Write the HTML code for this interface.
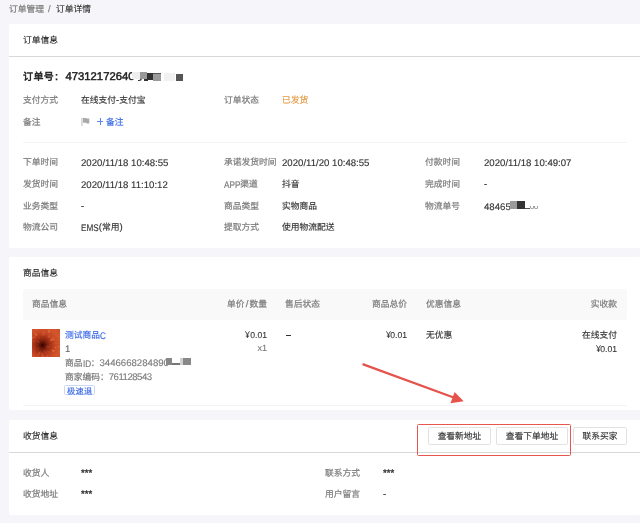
<!DOCTYPE html>
<html lang="zh-CN"><head><meta charset="utf-8">
<style>
@font-face{font-family:"LSA";src:local("Liberation Sans");size-adjust:110%;unicode-range:U+0000-024F,U+00A5,U+2013;}
@font-face{font-family:"LSA";font-weight:600 900;src:local("Liberation Sans Bold"),local("LiberationSans-Bold");size-adjust:107%;unicode-range:U+0000-024F;}
html,body{margin:0;padding:0}
body{width:640px;height:523px;overflow:hidden;position:relative;background:#f6f6fa;font-family:"LSA","Liberation Sans",sans-serif;font-size:8.75px;color:#333;text-rendering:geometricPrecision}
.wrap{position:absolute;left:0;top:0;width:640px;height:523px;will-change:transform}
.a{position:absolute;white-space:nowrap;line-height:12px;font-weight:400;-webkit-text-stroke-width:0.14px}
.card{position:absolute;left:9px;width:632px;background:#fff;border-radius:2px}
.lb{color:#7b7b7b;-webkit-text-stroke-width:0.2px}
.t{color:#1e1e1e;-webkit-text-stroke-width:0.1px}
.n{-webkit-text-stroke-width:0.12px}
.cap{display:inline-block;transform:scaleX(.85);transform-origin:0 50%;position:relative;top:.5px}
.yen{display:inline-block;transform:scaleX(.85);transform-origin:100% 50%;-webkit-text-stroke-width:.1px}
.hr{position:absolute;height:1px}
.r{text-align:right}
.blue{color:#3a69e8}
.btn{position:absolute;top:426.7px;height:18.6px;border:1px solid #e2e2e2;border-radius:2px;background:#fff;box-sizing:border-box}
.rd{position:absolute}
</style></head><body><div class="wrap">
<!-- breadcrumb -->
<div class="a lb" style="left:9px;top:4px">订单管理</div>
<div class="a lb n" style="left:48px;top:4px">/</div>
<div class="a" style="left:56px;top:4px;color:#333">订单详情</div>

<!-- card 1 -->
<div class="card" style="top:24px;height:224px"></div>
<div class="a t" style="left:23px;top:35px">订单信息</div>
<div class="hr" style="left:9px;top:56px;width:631px;background:#d8d8dc"></div>
<div class="a" style="left:23px;top:70px;font-size:10px;color:#1f1f1f;line-height:14px;letter-spacing:.4px;-webkit-text-stroke-width:0.5px">订单号</div>
<div class="a n" style="left:55px;top:70px;font-size:10px;color:#1f1f1f;line-height:14px;-webkit-text-stroke-width:0.6px">:</div>
<div class="a n" style="left:65.5px;top:70px;font-size:10.27px;color:#1f1f1f;line-height:14px;-webkit-text-stroke-width:0.5px">47312172640</div>
<div class="rd" style="left:132px;top:72px;width:7.5px;height:7px;background:#eeeeee"></div>
<div class="rd" style="left:138px;top:77.5px;width:3.5px;height:3.5px;border:1.3px solid #333;border-top:none;border-left:none;border-radius:0 0 3px 0;box-sizing:border-box"></div>
<div class="rd" style="left:140px;top:72px;width:7px;height:6.6px;background:#999"></div>
<div class="rd" style="left:143.8px;top:79.2px;width:4.7px;height:1.6px;background:#333"></div>
<div class="rd" style="left:147.2px;top:73px;width:6.3px;height:7px;background:#323232"></div>
<div class="rd" style="left:153px;top:73px;width:7.7px;height:7.5px;background:#9a9a9a;border-top:1px solid #555;box-sizing:border-box"></div>
<div class="rd" style="left:164px;top:73px;width:10.7px;height:7.6px;background:#f1f1f1"></div>
<div class="rd" style="left:175.8px;top:73.5px;width:7.4px;height:7.1px;background:#555"></div>

<div class="a lb" style="left:23px;top:95px">支付方式</div>
<div class="a" style="left:81px;top:95px">在线支付-支付宝</div>
<div class="a lb" style="left:224px;top:95px">订单状态</div>
<div class="a" style="left:282px;top:95px;color:#e3983f">已发货</div>

<div class="a lb" style="left:23px;top:117px">备注</div>
<svg style="position:absolute;left:80px;top:117px" width="11" height="10" viewBox="0 0 11 10"><rect x="1" y="0.8" width="1.8" height="8.1" fill="#d8d8d8"/><path d="M3 0.9 H6.2 L7 1.5 H9.3 V6.4 H6.8 L6 5.8 H3 Z" fill="#a9a9ad"/></svg>
<div class="rd" style="left:97px;top:121px;width:6.4px;height:1px;background:#5a85ea"></div>
<div class="rd" style="left:99.8px;top:118px;width:1px;height:6.8px;background:#5a85ea"></div>
<div class="a blue" style="left:106px;top:117px">备注</div>

<div class="hr" style="left:23px;top:142px;width:604px;background:#f4f4f4"></div>

<div class="a lb" style="left:23px;top:157px">下单时间</div>
<div class="a n" style="left:81px;top:158px">2020/11/18 10:48:55</div>
<div class="a lb" style="left:224px;top:157px">承诺发货时间</div>
<div class="a n" style="left:282px;top:158px">2020/11/20 10:48:55</div>
<div class="a lb" style="left:425px;top:157px">付款时间</div>
<div class="a n" style="left:484px;top:158px">2020/11/18 10:49:07</div>

<div class="a lb" style="left:23px;top:179px">发货时间</div>
<div class="a n" style="left:81px;top:180px">2020/11/18 11:10:12</div>
<div class="a lb" style="left:224px;top:179px"><span class="cap" style="margin-right:-2.9px">APP</span>渠道</div>
<div class="a" style="left:282px;top:179px">抖音</div>
<div class="a lb" style="left:425px;top:179px">完成时间</div>
<div class="a n" style="left:484px;top:179px">-</div>

<div class="a lb" style="left:23px;top:201px">业务类型</div>
<div class="a n" style="left:81px;top:201px">-</div>
<div class="a lb" style="left:224px;top:201px">商品类型</div>
<div class="a" style="left:282px;top:201px">实物商品</div>
<div class="a lb" style="left:425px;top:201px">物流单号</div>
<div class="a n" style="left:484px;top:202px">48465</div>
<div class="rd" style="left:510px;top:201px;width:7px;height:8px;background:#9a9a9a"></div>
<div class="rd" style="left:517px;top:201px;width:8px;height:8px;background:#333"></div>
<div class="rd" style="left:525px;top:208px;width:5px;height:1px;background:#555"></div>
<div class="rd" style="left:530px;top:206px;width:3.5px;height:3px;border:1px solid #999;border-top:none;border-radius:0 0 2px 2px;box-sizing:border-box"></div>
<div class="rd" style="left:534px;top:206px;width:3.5px;height:3px;border:1px solid #999;border-top:none;border-radius:0 0 2px 2px;box-sizing:border-box"></div>

<div class="a lb" style="left:23px;top:222px">物流公司</div>
<div class="a" style="left:81px;top:222px"><span class="cap" style="margin-right:-3.1px">EMS</span>(常用)</div>
<div class="a lb" style="left:224px;top:222px">提取方式</div>
<div class="a" style="left:282px;top:222px">使用物流配送</div>

<!-- card 2 -->
<div class="card" style="top:257px;height:153px"></div>
<div class="a t" style="left:23px;top:268px">商品信息</div>
<div style="position:absolute;left:23px;top:289px;width:604px;height:30.6px;background:#f9f9f9;border-radius:3px"></div>
<div class="a lb" style="left:32px;top:299px">商品信息</div>
<div class="a lb r" style="left:167px;width:100px;top:299px">单价<span style="margin:0 1.2px">/</span>数量</div>
<div class="a lb" style="left:285px;top:299px">售后状态</div>
<div class="a lb r" style="left:307px;width:100px;top:299px">商品总价</div>
<div class="a lb" style="left:426px;top:299px">优惠信息</div>
<div class="a lb r" style="left:517px;width:100px;top:299px">实收款</div>

<svg style="position:absolute;left:32px;top:329px" width="28" height="28" viewBox="0 0 28 28">
<defs><radialGradient id="fl" cx="10.6" cy="16.1" r="22" gradientUnits="userSpaceOnUse"><stop offset="0" stop-color="#2c0402"/><stop offset="0.1" stop-color="#5a1006"/><stop offset="0.32" stop-color="#9a2c14"/><stop offset="0.55" stop-color="#c44624"/><stop offset="0.8" stop-color="#d4562c"/><stop offset="1" stop-color="#cc502a"/></radialGradient></defs>
<rect width="28" height="28" fill="url(#fl)"/>
<ellipse cx="21.6" cy="10.4" rx="1.6" ry="0.6" transform="rotate(333 21.6 10.4)" fill="#f08048" opacity="0.53"/>
<ellipse cx="15.3" cy="27.2" rx="1.2" ry="0.6" transform="rotate(67 15.3 27.2)" fill="#e8703c" opacity="0.46"/>
<ellipse cx="0.9" cy="23.5" rx="1.9" ry="0.7" transform="rotate(143 0.9 23.5)" fill="#c84626" opacity="0.26"/>
<ellipse cx="5.6" cy="15.2" rx="1.2" ry="0.5" transform="rotate(190 5.6 15.2)" fill="#e8703c" opacity="0.12"/>
<ellipse cx="3.8" cy="29.1" rx="1.2" ry="0.5" transform="rotate(117 3.8 29.1)" fill="#d85a30" opacity="0.42"/>
<ellipse cx="4.2" cy="5.7" rx="1.3" ry="0.8" transform="rotate(238 4.2 5.7)" fill="#e8703c" opacity="0.50"/>
<ellipse cx="7.4" cy="23.6" rx="1.4" ry="0.4" transform="rotate(113 7.4 23.6)" fill="#e8703c" opacity="0.22"/>
<ellipse cx="16.8" cy="7.1" rx="2.2" ry="0.7" transform="rotate(305 16.8 7.1)" fill="#e8703c" opacity="0.29"/>
<ellipse cx="15.0" cy="13.9" rx="1.5" ry="0.7" transform="rotate(334 15.0 13.9)" fill="#ee8a50" opacity="0.06"/>
<ellipse cx="-1.8" cy="3.0" rx="1.3" ry="0.4" transform="rotate(227 -1.8 3.0)" fill="#d85a30" opacity="0.26"/>
<ellipse cx="21.7" cy="28.6" rx="1.0" ry="0.6" transform="rotate(48 21.7 28.6)" fill="#ee8a50" opacity="0.31"/>
<ellipse cx="-0.6" cy="11.7" rx="1.2" ry="0.7" transform="rotate(201 -0.6 11.7)" fill="#f08048" opacity="0.40"/>
<ellipse cx="2.3" cy="23.5" rx="2.2" ry="0.4" transform="rotate(138 2.3 23.5)" fill="#c84626" opacity="0.32"/>
<ellipse cx="16.4" cy="10.9" rx="1.5" ry="0.7" transform="rotate(319 16.4 10.9)" fill="#c84626" opacity="0.15"/>
<ellipse cx="18.4" cy="15.6" rx="1.3" ry="0.7" transform="rotate(356 18.4 15.6)" fill="#d85a30" opacity="0.29"/>
<ellipse cx="6.6" cy="19.6" rx="1.3" ry="0.7" transform="rotate(139 6.6 19.6)" fill="#e8703c" opacity="0.12"/>
<ellipse cx="2.2" cy="24.9" rx="2.2" ry="0.6" transform="rotate(134 2.2 24.9)" fill="#c84626" opacity="0.30"/>
<ellipse cx="-0.9" cy="26.1" rx="1.4" ry="0.5" transform="rotate(139 -0.9 26.1)" fill="#c84626" opacity="0.34"/>
<ellipse cx="17.6" cy="13.3" rx="2.2" ry="0.8" transform="rotate(339 17.6 13.3)" fill="#c84626" opacity="0.14"/>
<ellipse cx="16.3" cy="17.8" rx="1.6" ry="0.5" transform="rotate(17 16.3 17.8)" fill="#ee8a50" opacity="0.11"/>
<ellipse cx="17.2" cy="2.9" rx="1.4" ry="0.5" transform="rotate(297 17.2 2.9)" fill="#e8703c" opacity="0.29"/>
<ellipse cx="6.6" cy="12.6" rx="1.3" ry="0.8" transform="rotate(222 6.6 12.6)" fill="#e8703c" opacity="0.07"/>
<ellipse cx="3.4" cy="20.6" rx="1.1" ry="0.5" transform="rotate(148 3.4 20.6)" fill="#c84626" opacity="0.27"/>
<ellipse cx="17.7" cy="23.8" rx="2.1" ry="0.8" transform="rotate(47 17.7 23.8)" fill="#c84626" opacity="0.38"/>
<ellipse cx="13.5" cy="19.7" rx="1.0" ry="0.8" transform="rotate(51 13.5 19.7)" fill="#d85a30" opacity="0.11"/>
<ellipse cx="25.9" cy="18.2" rx="1.6" ry="0.7" transform="rotate(8 25.9 18.2)" fill="#d85a30" opacity="0.30"/>
<ellipse cx="21.5" cy="21.4" rx="1.5" ry="0.4" transform="rotate(26 21.5 21.4)" fill="#f08048" opacity="0.53"/>
<ellipse cx="19.5" cy="10.8" rx="1.9" ry="0.8" transform="rotate(329 19.5 10.8)" fill="#ee8a50" opacity="0.47"/>
<ellipse cx="23.4" cy="18.6" rx="1.0" ry="0.7" transform="rotate(11 23.4 18.6)" fill="#ee8a50" opacity="0.45"/>
<ellipse cx="6.4" cy="12.7" rx="1.8" ry="0.8" transform="rotate(219 6.4 12.7)" fill="#ee8a50" opacity="0.14"/>
<ellipse cx="0.2" cy="10.3" rx="2.0" ry="0.4" transform="rotate(209 0.2 10.3)" fill="#c84626" opacity="0.26"/>
<ellipse cx="0.4" cy="8.6" rx="1.3" ry="0.7" transform="rotate(216 0.4 8.6)" fill="#ee8a50" opacity="0.52"/>
<ellipse cx="3.8" cy="5.3" rx="2.1" ry="0.5" transform="rotate(238 3.8 5.3)" fill="#f08048" opacity="0.49"/>
<ellipse cx="12.7" cy="22.8" rx="2.1" ry="0.7" transform="rotate(73 12.7 22.8)" fill="#ee8a50" opacity="0.19"/>
<ellipse cx="11.2" cy="27.4" rx="1.3" ry="0.7" transform="rotate(87 11.2 27.4)" fill="#f08048" opacity="0.51"/>
<ellipse cx="-0.2" cy="25.7" rx="1.4" ry="0.5" transform="rotate(138 -0.2 25.7)" fill="#ee8a50" opacity="0.37"/>
<ellipse cx="14.3" cy="13.2" rx="1.1" ry="0.8" transform="rotate(322 14.3 13.2)" fill="#f08048" opacity="0.06"/>
<ellipse cx="15.9" cy="6.6" rx="1.6" ry="0.7" transform="rotate(299 15.9 6.6)" fill="#c84626" opacity="0.36"/>
<ellipse cx="14.7" cy="18.2" rx="2.1" ry="0.4" transform="rotate(27 14.7 18.2)" fill="#d85a30" opacity="0.08"/>
<ellipse cx="17.0" cy="16.9" rx="1.6" ry="0.4" transform="rotate(7 17.0 16.9)" fill="#d85a30" opacity="0.13"/>
<ellipse cx="13.7" cy="19.9" rx="1.8" ry="0.6" transform="rotate(51 13.7 19.9)" fill="#c84626" opacity="0.10"/>
<ellipse cx="7.6" cy="9.1" rx="1.6" ry="0.5" transform="rotate(246 7.6 9.1)" fill="#e8703c" opacity="0.26"/>
<ellipse cx="6.1" cy="15.1" rx="1.3" ry="0.7" transform="rotate(193 6.1 15.1)" fill="#c84626" opacity="0.09"/>
<ellipse cx="11.0" cy="5.0" rx="2.0" ry="0.8" transform="rotate(272 11.0 5.0)" fill="#e8703c" opacity="0.35"/>
<ellipse cx="19.2" cy="9.2" rx="1.6" ry="0.5" transform="rotate(321 19.2 9.2)" fill="#e8703c" opacity="0.34"/>
<ellipse cx="17.1" cy="2.0" rx="1.9" ry="0.5" transform="rotate(295 17.1 2.0)" fill="#ee8a50" opacity="0.59"/>
<ellipse cx="24.1" cy="14.2" rx="2.0" ry="0.5" transform="rotate(352 24.1 14.2)" fill="#e8703c" opacity="0.37"/>
<ellipse cx="21.0" cy="22.0" rx="1.7" ry="0.7" transform="rotate(30 21.0 22.0)" fill="#ee8a50" opacity="0.57"/>
<ellipse cx="6.4" cy="18.1" rx="1.7" ry="0.7" transform="rotate(154 6.4 18.1)" fill="#f08048" opacity="0.08"/>
<ellipse cx="11.2" cy="4.2" rx="1.7" ry="0.7" transform="rotate(273 11.2 4.2)" fill="#c84626" opacity="0.47"/>
<ellipse cx="1.7" cy="12.6" rx="1.5" ry="0.7" transform="rotate(202 1.7 12.6)" fill="#c84626" opacity="0.24"/>
<ellipse cx="23.3" cy="-1.2" rx="1.7" ry="0.6" transform="rotate(306 23.3 -1.2)" fill="#f08048" opacity="0.39"/>
<ellipse cx="13.7" cy="18.8" rx="1.5" ry="0.6" transform="rotate(41 13.7 18.8)" fill="#e8703c" opacity="0.05"/>
<ellipse cx="-1.3" cy="11.2" rx="1.9" ry="0.4" transform="rotate(203 -1.3 11.2)" fill="#c84626" opacity="0.41"/>
<ellipse cx="26.8" cy="7.3" rx="1.5" ry="0.5" transform="rotate(331 26.8 7.3)" fill="#ee8a50" opacity="0.29"/>
<ellipse cx="20.8" cy="8.7" rx="1.4" ry="0.5" transform="rotate(324 20.8 8.7)" fill="#c84626" opacity="0.26"/>
<ellipse cx="15.2" cy="15.4" rx="1.2" ry="0.4" transform="rotate(352 15.2 15.4)" fill="#d85a30" opacity="0.07"/>
<ellipse cx="1.3" cy="28.1" rx="1.1" ry="0.7" transform="rotate(128 1.3 28.1)" fill="#e8703c" opacity="0.55"/>
<ellipse cx="-1.5" cy="4.2" rx="1.9" ry="0.8" transform="rotate(224 -1.5 4.2)" fill="#e8703c" opacity="0.38"/>
<ellipse cx="-1.0" cy="23.1" rx="1.2" ry="0.5" transform="rotate(149 -1.0 23.1)" fill="#c84626" opacity="0.47"/>
<ellipse cx="6.7" cy="25.0" rx="2.2" ry="0.5" transform="rotate(114 6.7 25.0)" fill="#f08048" opacity="0.42"/>
<ellipse cx="16.1" cy="22.3" rx="1.9" ry="0.5" transform="rotate(48 16.1 22.3)" fill="#e8703c" opacity="0.24"/>
<ellipse cx="23.4" cy="11.1" rx="1.9" ry="0.5" transform="rotate(339 23.4 11.1)" fill="#e8703c" opacity="0.28"/>
<ellipse cx="1.2" cy="11.7" rx="2.0" ry="0.5" transform="rotate(205 1.2 11.7)" fill="#c84626" opacity="0.39"/>
<ellipse cx="19.8" cy="0.1" rx="1.6" ry="0.4" transform="rotate(300 19.8 0.1)" fill="#c84626" opacity="0.46"/>
<ellipse cx="21.1" cy="9.0" rx="1.2" ry="0.4" transform="rotate(326 21.1 9.0)" fill="#f08048" opacity="0.54"/>
<ellipse cx="14.8" cy="19.0" rx="2.2" ry="0.6" transform="rotate(34 14.8 19.0)" fill="#e8703c" opacity="0.09"/>
<ellipse cx="27.2" cy="17.5" rx="2.1" ry="0.5" transform="rotate(5 27.2 17.5)" fill="#ee8a50" opacity="0.38"/>
<ellipse cx="6.1" cy="12.6" rx="2.0" ry="0.5" transform="rotate(218 6.1 12.6)" fill="#e8703c" opacity="0.16"/>
<ellipse cx="2.8" cy="7.9" rx="1.7" ry="0.6" transform="rotate(227 2.8 7.9)" fill="#d85a30" opacity="0.49"/>
<ellipse cx="10.0" cy="-1.9" rx="2.0" ry="0.6" transform="rotate(268 10.0 -1.9)" fill="#d85a30" opacity="0.56"/>
<ellipse cx="4.5" cy="-0.7" rx="2.0" ry="0.6" transform="rotate(250 4.5 -0.7)" fill="#f08048" opacity="0.27"/>
<ellipse cx="3.8" cy="26.5" rx="1.0" ry="0.5" transform="rotate(123 3.8 26.5)" fill="#c84626" opacity="0.27"/>
<ellipse cx="8.2" cy="23.6" rx="1.5" ry="0.5" transform="rotate(108 8.2 23.6)" fill="#e8703c" opacity="0.21"/>
<ellipse cx="26.2" cy="16.1" rx="1.9" ry="0.7" transform="rotate(360 26.2 16.1)" fill="#c84626" opacity="0.26"/>
<ellipse cx="10.1" cy="27.3" rx="1.1" ry="0.5" transform="rotate(92 10.1 27.3)" fill="#ee8a50" opacity="0.23"/>
<ellipse cx="10.1" cy="25.0" rx="1.4" ry="0.6" transform="rotate(93 10.1 25.0)" fill="#ee8a50" opacity="0.39"/>
<ellipse cx="-1.4" cy="1.9" rx="1.1" ry="0.6" transform="rotate(230 -1.4 1.9)" fill="#e8703c" opacity="0.39"/>
<ellipse cx="20.7" cy="12.0" rx="2.2" ry="0.7" transform="rotate(338 20.7 12.0)" fill="#c84626" opacity="0.41"/>
<ellipse cx="-1.2" cy="22.5" rx="1.7" ry="0.5" transform="rotate(151 -1.2 22.5)" fill="#d85a30" opacity="0.42"/>
<ellipse cx="1.6" cy="1.2" rx="1.0" ry="0.7" transform="rotate(239 1.6 1.2)" fill="#c84626" opacity="0.26"/>
<ellipse cx="10.5" cy="11.2" rx="2.2" ry="0.8" transform="rotate(269 10.5 11.2)" fill="#e8703c" opacity="0.11"/>
<ellipse cx="16.1" cy="17.7" rx="2.0" ry="0.8" transform="rotate(16 16.1 17.7)" fill="#f08048" opacity="0.18"/>
<ellipse cx="16.6" cy="2.5" rx="1.1" ry="0.6" transform="rotate(294 16.6 2.5)" fill="#ee8a50" opacity="0.29"/>
<ellipse cx="17.3" cy="8.1" rx="1.2" ry="0.5" transform="rotate(310 17.3 8.1)" fill="#f08048" opacity="0.40"/>
<ellipse cx="2.2" cy="18.5" rx="1.7" ry="0.6" transform="rotate(164 2.2 18.5)" fill="#c84626" opacity="0.34"/>
<ellipse cx="16.6" cy="23.1" rx="1.2" ry="0.6" transform="rotate(49 16.6 23.1)" fill="#c84626" opacity="0.39"/>
<ellipse cx="13.9" cy="1.2" rx="1.4" ry="0.5" transform="rotate(282 13.9 1.2)" fill="#c84626" opacity="0.49"/>
<ellipse cx="13.9" cy="24.5" rx="1.3" ry="0.8" transform="rotate(68 13.9 24.5)" fill="#c84626" opacity="0.40"/>
<ellipse cx="27.7" cy="6.1" rx="1.0" ry="0.4" transform="rotate(330 27.7 6.1)" fill="#d85a30" opacity="0.34"/>
<ellipse cx="15.2" cy="16.9" rx="1.3" ry="0.5" transform="rotate(10 15.2 16.9)" fill="#e8703c" opacity="0.11"/>
<ellipse cx="15.0" cy="23.1" rx="2.2" ry="0.6" transform="rotate(58 15.0 23.1)" fill="#d85a30" opacity="0.19"/>
<ellipse cx="13.4" cy="11.6" rx="1.1" ry="0.7" transform="rotate(302 13.4 11.6)" fill="#c84626" opacity="0.14"/>
<ellipse cx="12.0" cy="4.2" rx="1.9" ry="0.6" transform="rotate(277 12.0 4.2)" fill="#f08048" opacity="0.38"/>
<ellipse cx="-1.8" cy="-1.8" rx="1.4" ry="0.6" transform="rotate(235 -1.8 -1.8)" fill="#f08048" opacity="0.40"/>
<ellipse cx="6.7" cy="20.3" rx="2.1" ry="0.4" transform="rotate(133 6.7 20.3)" fill="#e8703c" opacity="0.12"/>
</svg>
<div class="a blue" style="left:65px;top:330px">测试商品<span class="cap" style="margin-right:-1.05px">C</span></div>
<div class="a n" style="left:65px;top:344px;color:#666">1</div>
<div class="a lb" style="left:65px;top:358px">商品<span class="cap" style="margin-right:-1.45px">ID</span>：<span class="n">3446668284890</span></div>
<div class="rd" style="left:166px;top:358px;width:6px;height:7px;background:#888"></div>
<div class="rd" style="left:172px;top:363px;width:8px;height:1.5px;background:#777"></div>
<div class="rd" style="left:180px;top:358px;width:3px;height:7px;background:#d0d0d0"></div>
<div class="rd" style="left:183px;top:358px;width:8px;height:7px;background:#888"></div>
<div class="a lb" style="left:65px;top:372px">商家编码：<span class="n" style="letter-spacing:-.5px">761128543</span></div>
<div style="position:absolute;left:64px;top:385px;width:31px;height:10px;border:1px solid #cad8f7;box-sizing:border-box;border-radius:1.5px"></div>
<div class="a blue" style="left:67px;top:385px;font-size:8.2px;letter-spacing:.3px">极速退</div>

<div class="a r n" style="left:167px;width:100px;top:329px;font-size:7.8px;-webkit-text-stroke-width:0.1px">0.01</div>
<svg style="position:absolute;left:245px;top:331.3px" width="5" height="7" viewBox="0 0 5 7"><path d="M0.4 0.3 L2.45 3.5 L4.5 0.3 M2.45 3.5 V6.9" stroke="#333" stroke-width="0.9" fill="none"/><path d="M0.8 4.1 H4.1 M0.8 5.6 H4.1" stroke="#333" stroke-width="0.65" fill="none"/></svg>
<div class="a r lb n" style="left:167px;width:100px;top:342px;font-size:8.2px">x1</div>
<div class="rd" style="left:286px;top:335px;width:4.5px;height:1px;background:#333"></div>
<div class="a r n" style="left:307px;width:100px;top:329px;font-size:7.8px;-webkit-text-stroke-width:0.1px">0.01</div>
<svg style="position:absolute;left:386.2px;top:331.3px" width="5" height="7" viewBox="0 0 5 7"><path d="M0.4 0.3 L2.45 3.5 L4.5 0.3 M2.45 3.5 V6.9" stroke="#333" stroke-width="0.9" fill="none"/><path d="M0.8 4.1 H4.1 M0.8 5.6 H4.1" stroke="#333" stroke-width="0.65" fill="none"/></svg>
<div class="a" style="left:426px;top:330px">无优惠</div>
<div class="a r" style="left:517px;width:100px;top:330px">在线支付</div>
<div class="a r n" style="left:517px;width:100px;top:343px;font-size:7.8px;-webkit-text-stroke-width:0.1px">0.01</div>
<svg style="position:absolute;left:596.4px;top:345.1px" width="5" height="7" viewBox="0 0 5 7"><path d="M0.4 0.3 L2.45 3.5 L4.5 0.3 M2.45 3.5 V6.9" stroke="#333" stroke-width="0.9" fill="none"/><path d="M0.8 4.1 H4.1 M0.8 5.6 H4.1" stroke="#333" stroke-width="0.65" fill="none"/></svg>
<div class="hr" style="left:23px;top:405px;width:604px;background:#f4f4f4"></div>

<!-- arrow -->
<svg style="position:absolute;left:0;top:0" width="640" height="523" viewBox="0 0 640 523">
<line x1="362.6" y1="364.1" x2="455" y2="398" stroke="#e5534b" stroke-width="2.2"/>
<polygon points="463.7,401.3 454.6,392 450.5,403.3" fill="#e5534b"/>
</svg>

<!-- card 3 -->
<div class="card" style="top:420px;height:94.6px"></div>
<div class="a t" style="left:23px;top:431px">收货信息</div>
<div class="hr" style="left:9px;top:452px;width:631px;background:#d8d8dc"></div>
<div class="btn" style="left:428px;width:63px"></div>
<div class="a" style="left:428px;width:63px;top:431px;text-align:center">查看新地址</div>
<div class="btn" style="left:496px;width:72px"></div>
<div class="a" style="left:496px;width:72px;top:431px;text-align:center">查看下单地址</div>
<div class="btn" style="left:573px;width:54px"></div>
<div class="a" style="left:573px;width:54px;top:431px;text-align:center">联系买家</div>
<div style="position:absolute;left:417px;top:423.8px;width:153.6px;height:32px;border:1.8px solid #e8574d;border-radius:1.5px;box-sizing:border-box"></div>

<div class="a lb" style="left:23px;top:468px">收货人</div>
<div class="a n" style="left:81px;top:468px;-webkit-text-stroke-width:0.35px">***</div>
<div class="a lb" style="left:325px;top:468px">联系方式</div>
<div class="a n" style="left:383px;top:468px;-webkit-text-stroke-width:0.35px">***</div>
<div class="a lb" style="left:23px;top:489px">收货地址</div>
<div class="a n" style="left:81px;top:489px;-webkit-text-stroke-width:0.35px">***</div>
<div class="a lb" style="left:325px;top:489px">用户留言</div>
<div class="a n" style="left:383px;top:489px">-</div>
</div></body></html>
